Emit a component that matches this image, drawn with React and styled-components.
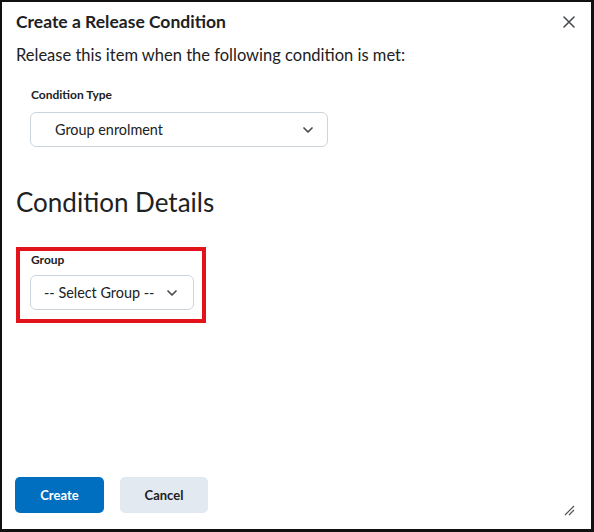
import React from "react";
import styled, { createGlobalStyle } from "styled-components";

const Global = createGlobalStyle`
  html, body { margin: 0; padding: 0; background: #fff; }
  body { font-family: Lato, "Noto Sans", sans-serif; color: #202122; }
  * { box-sizing: border-box; }
`;

const Dialog = styled.div`
  width: 594px;
  height: 532px;
  border: 2px solid #111;
  border-right-width: 3px;
  border-bottom-width: 3px;
  display: flex;
  flex-direction: column;
  position: relative;
  background: #fff;
`;

const Header = styled.div`
  display: flex;
  align-items: center;
  justify-content: space-between;
  padding: 8px 14px 0 14px;
`;

const Title = styled.h1`
  margin: 0;
  font-size: 17.5px;
  line-height: 24px;
  font-weight: 700;
  color: #202122;
`;

const CloseButton = styled.button`
  border: none;
  background: none;
  padding: 0;
  width: 18px;
  height: 18px;
  display: flex;
  align-items: center;
  justify-content: center;
  margin-right: -1px;
  color: #494c4e;
`;

const Body = styled.div`
  flex: 1;
  padding: 0 14px;
  display: flex;
  flex-direction: column;
`;

const Intro = styled.p`
  margin: 10px 0 0 0;
  font-size: 16.5px;
  line-height: 22px;
`;

const Field = styled.div`
  display: flex;
  flex-direction: column;
  gap: ${p => p.$gap}px;
  padding-left: ${p => p.$indent || 0}px;
`;

const Label = styled.label`
  font-size: 12px;
  font-weight: 700;
  line-height: 16px;
  padding-left: 1px;
`;

const Select = styled.div`
  width: ${p => p.$width}px;
  height: 35px;
  border: 1px solid #cdd5dc;
  border-radius: 6px;
  display: flex;
  align-items: center;
  justify-content: space-between;
  padding: 0 ${p => p.$padRight}px 0 ${p => p.$padLeft}px;
  font-size: 14.4px;
  color: #202122;
`;

const TypeSection = styled.div`
  margin-top: 21px;
`;

const Heading = styled.h2`
  margin: 39px 0 0 0;
  font-size: 26px;
  font-weight: 400;
  line-height: 32px;
`;

const Highlight = styled.div`
  margin-top: 29px;
  width: 190px;
  height: 76px;
  border: 4px solid #e3131b;
  padding: 1px 0 0 10px;
`;

const Footer = styled.div`
  display: flex;
  gap: 16px;
  padding: 0 13px 16px 13px;
`;

const Button = styled.button`
  height: 36px;
  width: ${p => p.$width}px;
  border: none;
  border-radius: 5px;
  font-family: Lato, "Noto Sans", sans-serif;
  font-size: 13px;
  font-weight: 700;
  background: ${p => (p.$primary ? "#006fbf" : "#e3e9f1")};
  color: ${p => (p.$primary ? "#fff" : "#202122")};
`;

const Grip = styled.div`
  position: absolute;
  right: 16px;
  bottom: 17px;
  width: 12px;
  height: 12px;
`;

const Chevron = () => (
  <svg width="12" height="8" viewBox="0 0 12 8">
    <path d="M2 2 L6 6 L10 2" fill="none" stroke="#494c4e" strokeWidth="1.7" strokeLinecap="round" strokeLinejoin="round" />
  </svg>
);

export default function App() {
  return (
    <>
      <Global />
      <Dialog>
        <Header>
          <Title>Create a Release Condition</Title>
          <CloseButton aria-label="Close">
            <svg width="12" height="12" viewBox="0 0 12 12">
              <path d="M1 1 L11 11 M11 1 L1 11" stroke="#494c4e" strokeWidth="1.6" strokeLinecap="round" />
            </svg>
          </CloseButton>
        </Header>
        <Body>
          <Intro>Release this item when the following condition is met:</Intro>
          <TypeSection>
            <Field $indent={14} $gap={9}>
              <Label>Condition Type</Label>
              <Select $width={298} $padLeft={24} $padRight={13}>
                <span>Group enrolment</span>
                <Chevron />
              </Select>
            </Field>
          </TypeSection>
          <Heading>Condition Details</Heading>
          <Highlight>
            <Field $gap={7}>
              <Label>Group</Label>
              <Select $width={164} $padLeft={13} $padRight={15}>
                <span>-- Select Group --</span>
                <Chevron />
              </Select>
            </Field>
          </Highlight>
        </Body>
        <Footer>
          <Button $primary $width={89}>Create</Button>
          <Button $width={88}>Cancel</Button>
        </Footer>
        <Grip>
          <svg width="12" height="12" viewBox="0 0 12 12">
            <path d="M2 11 L11 2 M6 11 L11 6" stroke="#555" strokeWidth="1.2" />
          </svg>
        </Grip>
      </Dialog>
    </>
  );
}
